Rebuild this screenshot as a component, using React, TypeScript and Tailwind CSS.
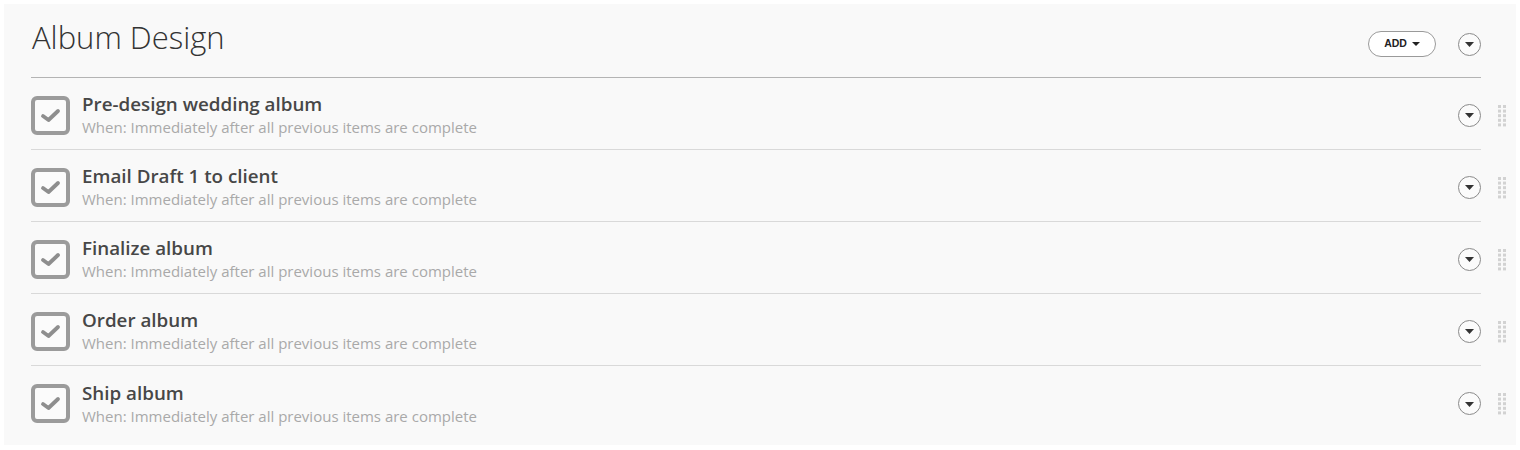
import React from "react";

const items = [
  "Pre-design wedding album",
  "Email Draft 1 to client",
  "Finalize album",
  "Order album",
  "Ship album",
];

function CircleCaret() {
  return (
    <div className="flex h-[23px] w-[23px] items-center justify-center rounded-full border border-[#8a8a8a] bg-[#fbfbfb]">
      <svg width="9" height="5" viewBox="0 0 9 5" className="mt-[1px]">
        <path d="M0 0 H9 L4.5 5 Z" fill="#333" />
      </svg>
    </div>
  );
}

function Handle() {
  const dots = [];
  for (let r = 0; r < 5; r++) {
    for (let c = 0; c < 2; c++) {
      dots.push(<rect key={`${r}-${c}`} x={c * 5} y={r * 4.6} width="3" height="3" fill="#d2d2d2" />);
    }
  }
  return (
    <svg width="8" height="22" viewBox="0 0 8 22">
      {dots}
    </svg>
  );
}

function Check() {
  return (
    <div className="flex h-[39px] w-[39px] shrink-0 items-center justify-center rounded-[6px] border-[4px] border-[#9b9b9b] bg-[#fbfbfb]">
      <svg width="21" height="17" viewBox="0 0 21 17">
        <path d="M3 9 L8.5 13 L18 4" fill="none" stroke="#8e8e8e" strokeWidth="3.8" strokeLinecap="round" strokeLinejoin="round" />
      </svg>
    </div>
  );
}

export default function App() {
  return (
    <div className="min-h-[450px] w-full bg-white p-[4px]" style={{ fontFamily: '"Open Sans", "Noto Sans", sans-serif' }}>
      <div className="bg-[#f9f9f9] pl-[27px] pr-0 pb-[7px]">
        <div className="flex">
          <div className="flex-1">
            <div className="flex h-[74px] items-start justify-between border-b border-[#b4b4b4]">
              <h1 className="mt-[13px] pl-[1px] text-[31px] font-light leading-[40px] text-[#333]">Album Design</h1>
              <div className="mt-[27px] flex items-center">
                <button
                  className="flex h-[26px] w-[68px] items-center justify-center gap-[5px] rounded-full border border-[#9a9a9a] bg-white text-[10.5px] font-bold text-[#222]"
                  style={{ fontFamily: '"Liberation Sans", Arial, sans-serif' }}
                >
                  ADD
                  <svg width="8" height="4" viewBox="0 0 8 4">
                    <path d="M0 0 H8 L4 4 Z" fill="#222" />
                  </svg>
                </button>
                <div className="ml-[22px]">
                  <CircleCaret />
                </div>
              </div>
            </div>
          </div>
          <div className="w-[35px]" />
        </div>
        {items.map((t, i) => (
          <div key={t} className="flex">
            <div className={`flex h-[72px] flex-1 items-center ${i < items.length - 1 ? "border-b border-[#d9d9d9]" : ""}`}>
              <div className="mt-[3px]">
                <Check />
              </div>
              <div className="ml-[12px] mt-[3px] flex flex-1 flex-col gap-[2px]">
                <div className="text-[18.8px] font-semibold leading-[22px] text-[#474747]">{t}</div>
                <div className="text-[15px] leading-[20px] text-[#a9a9a9]">When: Immediately after all previous items are complete</div>
              </div>
              <div className="mt-[3px]">
                <CircleCaret />
              </div>
            </div>
            <div className="flex w-[35px] items-center justify-end pr-[10px]">
              <div className="mt-[3px]">
                <Handle />
              </div>
            </div>
          </div>
        ))}
      </div>
    </div>
  );
}
